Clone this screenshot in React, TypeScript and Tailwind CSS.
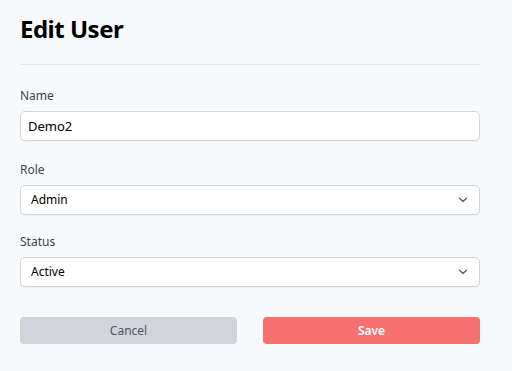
import React, { useState } from "react";

const Chevron = () => (
  <svg
    className="pointer-events-none absolute right-[12px] top-1/2 -translate-y-1/2"
    width="10"
    height="6"
    viewBox="0 0 10 6"
    fill="none"
  >
    <path d="M1.5 1.2 5 4.6 8.5 1.2" stroke="#5b6478" strokeWidth="1.4" strokeLinecap="round" strokeLinejoin="round" />
  </svg>
);

export default function App() {
  const [name, setName] = useState("Demo2");
  const [role, setRole] = useState("Admin");
  const [status, setStatus] = useState("Active");

  return (
    <div
      className="min-h-[371px] w-full bg-[#f8f9fb] px-5 pt-[13px]"
      style={{ fontFamily: '"Noto Sans", "Open Sans", sans-serif' }}
    >
      <div className="w-[460px]">
        <h1 className="text-[24px] font-bold leading-8 tracking-[-0.5px] text-black">Edit User</h1>
        <div className="mt-[19px] border-t border-[#e3e5e9]" />

        <div className="mt-[23px]">
          <label className="mb-[7px] block text-xs leading-4 text-[#3c4250]">Name</label>
          <input
            type="text"
            value={name}
            onChange={(e) => setName(e.target.value)}
            className="h-[30px] w-full rounded-[5px] border border-[#d3d5dc] bg-white px-[7px] text-[13px] text-black shadow-[0_1px_1px_rgba(0,0,0,0.04)] focus:outline-none"
          />
        </div>

        <div className="mt-[21px]">
          <label className="mb-[7px] block text-xs leading-4 text-[#3c4250]">Role</label>
          <div className="relative">
            <select
              value={role}
              onChange={(e) => setRole(e.target.value)}
              className="h-[30px] w-full appearance-none rounded-[5px] border border-[#d3d5dc] bg-white pl-[10px] text-xs text-black shadow-[0_1px_1px_rgba(0,0,0,0.04)] focus:outline-none"
            >
              <option>Admin</option>
              <option>User</option>
            </select>
            <Chevron />
          </div>
        </div>

        <div className="mt-[19px]">
          <label className="mb-[7px] block text-xs leading-4 text-[#3c4250]">Status</label>
          <div className="relative">
            <select
              value={status}
              onChange={(e) => setStatus(e.target.value)}
              className="h-[30px] w-full appearance-none rounded-[5px] border border-[#d3d5dc] bg-white pl-[10px] text-xs text-black shadow-[0_1px_1px_rgba(0,0,0,0.04)] focus:outline-none"
            >
              <option>Active</option>
              <option>Inactive</option>
            </select>
            <Chevron />
          </div>
        </div>

        <div className="mt-[30px] flex gap-[26px]">
          <button className="h-[27px] flex-1 rounded-[4px] bg-[#d1d5db] text-xs text-[#4b5563]">
            Cancel
          </button>
          <button className="h-[27px] flex-1 rounded-[4px] bg-[#f87171] text-xs font-semibold text-white">
            Save
          </button>
        </div>
      </div>
    </div>
  );
}
